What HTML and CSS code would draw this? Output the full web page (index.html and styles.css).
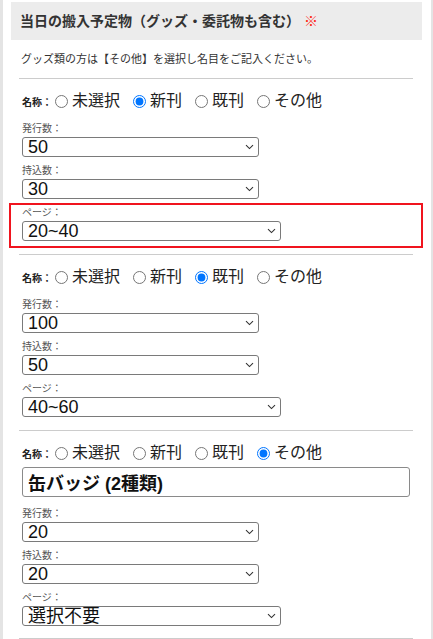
FILE: index.html
```html
<!DOCTYPE html>
<html>
  <head>
    <meta charset="utf-8">
    <title>搬入予定物</title>
    <link rel="stylesheet" href="styles.css">
  </head>
  <body>
    <div class="panel">
      <h3 class="panel-title">当日の搬入予定物（グッズ・委託物も含む） <span class="req">※</span></h3>
      <div class="panel-body">
        <p class="note">グッズ類の方は【その他】を選択し名目をご記入ください。</p>

        <div class="item">
          <div class="kind">
            <span class="kind-label">名称：</span>
            <label class="opt"><input type="radio" name="kind1">未選択</label>
            <label class="opt"><input type="radio" name="kind1" checked>新刊</label>
            <label class="opt"><input type="radio" name="kind1">既刊</label>
            <label class="opt"><input type="radio" name="kind1">その他</label>
          </div>
          <div class="field">
            <label class="field-label">発行数：</label>
            <select class="sel"><option>50</option></select>
          </div>
          <div class="field">
            <label class="field-label">持込数：</label>
            <select class="sel"><option>30</option></select>
          </div>
          <div class="field has-error">
            <label class="field-label">ページ：</label>
            <select class="sel sel-wide"><option>20~40</option></select>
          </div>
        </div>

        <div class="item">
          <div class="kind">
            <span class="kind-label">名称：</span>
            <label class="opt"><input type="radio" name="kind2">未選択</label>
            <label class="opt"><input type="radio" name="kind2">新刊</label>
            <label class="opt"><input type="radio" name="kind2" checked>既刊</label>
            <label class="opt"><input type="radio" name="kind2">その他</label>
          </div>
          <div class="field">
            <label class="field-label">発行数：</label>
            <select class="sel"><option>100</option></select>
          </div>
          <div class="field">
            <label class="field-label">持込数：</label>
            <select class="sel"><option>50</option></select>
          </div>
          <div class="field">
            <label class="field-label">ページ：</label>
            <select class="sel sel-wide"><option>40~60</option></select>
          </div>
        </div>

        <div class="item">
          <div class="kind">
            <span class="kind-label">名称：</span>
            <label class="opt"><input type="radio" name="kind3">未選択</label>
            <label class="opt"><input type="radio" name="kind3">新刊</label>
            <label class="opt"><input type="radio" name="kind3">既刊</label>
            <label class="opt"><input type="radio" name="kind3" checked>その他</label>
          </div>
          <input class="name-input" type="text" value="缶バッジ (2種類)">
          <div class="field">
            <label class="field-label">発行数：</label>
            <select class="sel"><option>20</option></select>
          </div>
          <div class="field">
            <label class="field-label">持込数：</label>
            <select class="sel"><option>20</option></select>
          </div>
          <div class="field">
            <label class="field-label">ページ：</label>
            <select class="sel sel-wide"><option>選択不要</option></select>
          </div>
        </div>
      </div>
    </div>
  </body>
</html>
```

FILE: styles.css
```css
body {
  margin: 0;
  background-color: #e4e4e4;
  font-family: "Liberation Sans", "Noto Sans CJK JP", sans-serif;
  color: #333;
}

.panel {
  background: white;
  margin: 0 2px 0 3px;
  padding-top: 2px;
  height: 637px;
  overflow: hidden;
}

.panel-title {
  margin: 0 9px 0 8px;
  height: 38px;
  line-height: 38px;
  padding-left: 9px;
  background-color: #ececec;
  font-size: 14px;
  font-weight: bold;
  color: #333;
}

.req {
  color: #f21;
  font-weight: normal;
}

.panel-body {
  padding: 0 18px 0 16px;
}

.note {
  margin: 11px 0;
  padding-left: 2px;
  font-size: 11px;
  line-height: 16px;
  color: #333;
}

.item {
  display: flex;
  flex-direction: column;
  border-top: 1px solid #cccccc;
  padding: 12px 3px 13px;
}

.item:last-child {
  padding-bottom: 12px;
  border-bottom: 1px solid #cccccc;
}

.kind {
  display: flex;
  align-items: center;
  height: 20px;
  margin-bottom: 4px;
}

.kind-label {
  font-size: 10px;
  font-weight: bold;
  color: #222;
  margin-right: 3px;
}

.opt {
  display: inline-flex;
  align-items: center;
  gap: 4px;
  margin-right: 13px;
  font-size: 16px;
  line-height: 20px;
  color: #222;
}

.opt input {
  margin: 0;
  width: 13px;
  height: 13px;
}

.field {
  position: relative;
  padding-top: 8px;
}

.field-label {
  display: block;
  margin-bottom: 2px;
  font-size: 10px;
  line-height: 12px;
  color: #555;
}

.sel {
  display: block;
  appearance: none;
  -webkit-appearance: none;
  box-sizing: border-box;
  width: 237px;
  height: 20px;
  margin: 0;
  padding: 0 0 0 5px;
  border: 1px solid #7a7a7a;
  border-radius: 3px;
  font-family: inherit;
  font-size: 18px;
  line-height: 18px;
  color: #111;
  background: white url("data:image/svg+xml;utf8,<svg xmlns='http://www.w3.org/2000/svg' width='9' height='6' viewBox='0 0 9 6'><path d='M1 1.2 4.5 4.6 8 1.2' fill='none' stroke='%23333' stroke-width='1.1'/></svg>") no-repeat right 4px center / 9px 6px;
}

.sel-wide {
  width: 259px;
}

.has-error::before {
  content: "";
  position: absolute;
  top: 4px;
  left: -13px;
  right: -13px;
  bottom: -7px;
  border: 2px solid #f0141e;
}

.name-input {
  display: block;
  box-sizing: border-box;
  width: 100%;
  height: 30px;
  margin: 0 0 3px;
  padding: 0 5px;
  border: 1px solid #8a8a8a;
  border-radius: 3px;
  font-family: inherit;
  font-size: 18px;
  font-weight: bold;
  color: #111;
}
```
